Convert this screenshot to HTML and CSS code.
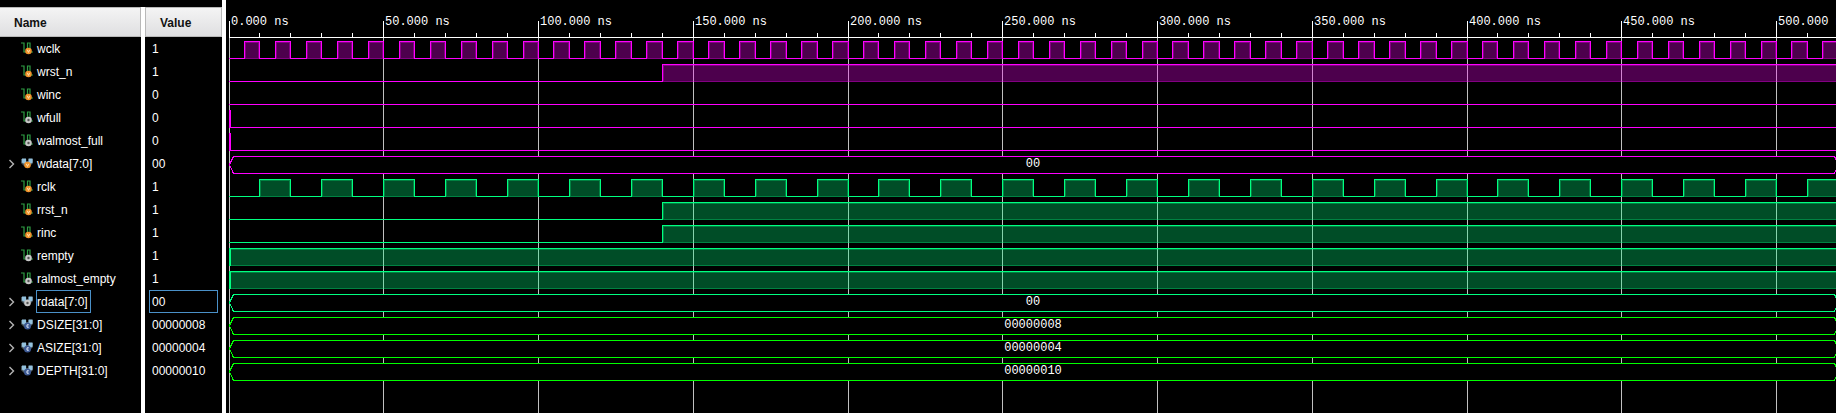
FILE: index.html
```
<!DOCTYPE html>
<html lang="en">
<head>
<meta charset="utf-8">
<title>Waveform viewer</title>
<link rel="stylesheet" href="styles.css">
</head>
<body>
<svg class="defs" aria-hidden="true">
  <symbol id="wire" viewBox="0 0 14 14">
    <path d="M0 1H3V10H5M6.5 8V1H9V10H12" fill="none" stroke="#2f9e44" stroke-width="1.2"/>
  </symbol>
  <symbol id="bus" viewBox="0 0 14 14">
    <path d="M0 2H12V6L9 9H3L0 6Z" fill="#4a5860"/>
    <path d="M1 1.5H5V6.5H2.5L1 5.5ZM7.5 1.5H11.5V5.5L10 6.5H7.5Z" fill="#93c1dd"/>
    <path d="M5.3 1H7.2V4H5.3Z" fill="#000"/>
  </symbol>
  <symbol id="in" viewBox="0 0 14 14">
    <circle cx="7.5" cy="9" r="3.3" fill="#f0932b"/>
    <path d="M6.3 7.8L7.5 10.4L8.7 7.8" fill="none" stroke="#ffe0b0" stroke-width="1"/>
  </symbol>
  <symbol id="out" viewBox="0 0 14 14">
    <circle cx="7.5" cy="9" r="3.3" fill="#c8c8c8"/>
    <circle cx="7.5" cy="9" r="1.2" fill="#555"/>
  </symbol>
  <symbol id="const" viewBox="0 0 14 14">
    <circle cx="7.5" cy="9" r="3.5" fill="#3d5a94"/>
    <path d="M8.8 7.8H7V10.2H8.8" fill="none" stroke="#dfe8f8" stroke-width="1"/>
  </symbol>
</svg>
<main class="viewer">
  <section class="signals">
    <table class="signal-table">
      <thead>
        <tr><th class="name-head" scope="col">Name</th><td class="split"></td><th class="value-head" scope="col">Value</th></tr>
      </thead>
      <tbody id="rows"></tbody>
    </table>
  </section>
  <section class="waves">
    <svg class="chart" id="chart" role="img" aria-label="Signal waveforms"></svg>
  </section>
</main>
<script src="viewer.js"></script>
</body>
</html>
```
FILE: styles.css
```
* {
  box-sizing: border-box;
}

body {
  margin: 0;
  background: #000;
  color: #fff;
  font: 12px/22px "Liberation Sans", Arial, sans-serif;
}

.defs {
  display: none;
}

.viewer {
  display: flex;
  min-height: 100vh;
}

.signals {
  display: flex;
  flex: none;
  padding-top: 7px;
  border-right: 4px solid #fff;
}

.signal-table {
  border-collapse: separate;
  border-spacing: 0;
  table-layout: fixed;
  width: 222px;
}

.signal-table th,
.signal-table td {
  padding: 0;
  text-align: left;
  white-space: nowrap;
}

.signal-table th {
  height: 30px;
  border: 1px solid #b8b8b8;
  background: linear-gradient(#f4f4f4, #dfdfe1);
  color: #111;
  font-weight: bold;
}

.signal-table .name-head {
  width: 141px;
  padding: 2px 0 0 14px;
  border-left: 0;
}

.signal-table .value-head {
  padding: 2px 0 0 14px;
}

.signal-table .split {
  width: 4px;
  background: #fff;
}

.row td {
  height: 23px;
}

.name-cell {
  display: flex;
  align-items: center;
  height: 23px;
  padding-left: 8px;
}

.expander {
  width: 12px;
  height: 12px;
  padding: 0;
  border: 0;
  background: none;
}

.expander svg {
  display: block;
  width: 8px;
  height: 12px;
  fill: none;
  stroke: #b4b4b4;
  stroke-width: 1.4;
}

.spacer {
  width: 12px;
}

.icon {
  flex: none;
  width: 14px;
  height: 14px;
  margin: 0 1px;
}

.label,
.value {
  height: 23px;
  border: 1px solid transparent;
}

.label {
  padding-right: 2px;
}

.value {
  margin: 0 4px;
  padding-left: 2px;
}

.selected .label,
.selected .value {
  border-color: #4a90c8;
}

.waves {
  flex: 1;
  min-width: 0;
  display: flex;
}

.chart {
  flex: 1;
  min-width: 0;
  shape-rendering: crispEdges;
  font: 12px "Liberation Mono", "Courier New", monospace;
}

.chart text {
  fill: #fff;
}

.centered {
  text-anchor: middle;
}

.axis {
  fill: #fff;
}

.grid {
  fill: #c0c0c0;
}

.magenta {
  color: #ff00ff;
}

.spring {
  color: #00ff80;
}

.green {
  color: #00ff00;
}

.line {
  fill: currentColor;
}

.tint {
  fill: currentColor;
  fill-opacity: 0.3;
}

.bus {
  fill: #000;
  stroke: currentColor;
}
```
FILE: viewer.js
```
const signals = [
  { name: "wclk", value: "1", icon: "in", color: "magenta", clock: [5, 10] },
  { name: "wrst_n", value: "1", icon: "in", color: "magenta", rise: 140 },
  { name: "winc", value: "0", icon: "in", color: "magenta" },
  { name: "wfull", value: "0", icon: "out", color: "magenta", start: true },
  { name: "walmost_full", value: "0", icon: "out", color: "magenta", start: true },
  { name: "wdata[7:0]", value: "00", icon: "in", color: "magenta", bus: true },
  { name: "rclk", value: "1", icon: "in", color: "spring", clock: [10, 20] },
  { name: "rrst_n", value: "1", icon: "in", color: "spring", rise: 140 },
  { name: "rinc", value: "1", icon: "in", color: "spring", rise: 140 },
  { name: "rempty", value: "1", icon: "out", color: "spring", rise: 0, start: true },
  { name: "ralmost_empty", value: "1", icon: "out", color: "spring", rise: 0, start: true },
  { name: "rdata[7:0]", value: "00", icon: "out", color: "spring", bus: true, selected: true },
  { name: "DSIZE[31:0]", value: "00000008", icon: "const", color: "green", bus: true },
  { name: "ASIZE[31:0]", value: "00000004", icon: "const", color: "green", bus: true },
  { name: "DEPTH[31:0]", value: "00000010", icon: "const", color: "green", bus: true }
];

const HEADER = 37;
const ROW = 23;
const ORIGIN = 3;
const SCALE = 3.095;

function buildTable() {
  const rows = signals.map(s => `
    <tr class="row${s.selected ? " selected" : ""}">
      <td><div class="name-cell">
        ${s.bus
          ? `<button class="expander" aria-label="Expand ${s.name}"><svg viewBox="0 0 8 12"><path d="M1.5 2L5.5 6L1.5 10"/></svg></button>`
          : `<span class="spacer"></span>`}
        <svg class="icon" viewBox="0 0 14 14"><use href="#${s.bus ? "bus" : "wire"}" width="14" height="14"/><use href="#${s.icon}" x="${s.bus ? -1 : 0}" y="${s.bus ? -1 : 0}" width="14" height="14"/></svg>
        <span class="label">${s.name}</span>
      </div></td>
      <td class="split"></td>
      <td><div class="value">${s.value}</div></td>
    </tr>`);
  document.getElementById("rows").innerHTML =
    rows.join("") + `<tr><td></td><td class="split"></td><td></td></tr>`;
}

const xAt = ns => ORIGIN + Math.floor(ns * SCALE);
const rect = (cls, x, y, w, h) => `<rect class="${cls}" x="${x}" y="${y}" width="${w}" height="${h}"/>`;

function high(x1, x2, top) {
  const w = x2 - x1;
  return rect("tint", x1, top, w, 18) +
    rect("tint", x1 + 1, top + 1, w - 1, 1) +
    rect("tint", x1, top + 17, w, 1) +
    rect("tint", x1 + 1, top + 2, 1, 15) +
    rect("tint", x2 - 1, top + 2, 1, 15) +
    rect("line", x1, top, w, 1) +
    rect("line", x1, top, 1, 18) +
    rect("line", x2, top, 1, 18);
}

function drawSignal(s, top, width) {
  const low = top + 17;
  let out = "";
  if (s.bus) {
    const end = width - 2;
    const mid = top + 8;
    out += `<path class="bus" transform="translate(.5 .5)" d="M${ORIGIN} ${mid}L${ORIGIN + 4} ${top}H${end}L${end + 4} ${mid}L${end} ${low}H${ORIGIN + 4}Z"/>`;
    out += `<text class="centered" x="${Math.round((ORIGIN + width) / 2)}" y="${top + 11}">${s.value}</text>`;
  } else if (s.clock) {
    const [rise, period] = s.clock;
    let from = ORIGIN;
    for (let t = rise; xAt(t) < width; t += period) {
      const fall = xAt(t + period - rise);
      out += rect("line", from, low, xAt(t) - from, 1) + high(xAt(t), fall, top);
      from = fall;
    }
    if (from < width) out += rect("line", from, low, width - from, 1);
  } else if (s.rise !== undefined) {
    const x = xAt(s.rise);
    out += rect("line", ORIGIN, low, x - ORIGIN, 1) + high(x, width + 2, top);
  } else {
    out += rect("line", ORIGIN, low, width - ORIGIN, 1);
  }
  if (s.start) out += rect("line", ORIGIN, top, 2, 18);
  return `<g class="${s.color}">${out}</g>`;
}

function drawChart() {
  const chart = document.getElementById("chart");
  const { width, height } = chart.getBoundingClientRect();
  let out = "";
  for (let t = 0; xAt(t) < width; t += 10) {
    const x = xAt(t);
    if (t % 50 === 0) {
      out += rect("axis", x, 21, 1, 16) + rect("grid", x, HEADER, 1, height - HEADER);
      out += `<text x="${x + 2}" y="25">${t}.000 ns</text>`;
    } else {
      out += rect("axis", x, 33, 1, 4);
    }
  }
  out += rect("axis", ORIGIN, HEADER, width - ORIGIN, 1);
  signals.forEach((s, i) => { out += drawSignal(s, HEADER + i * ROW + 4, width); });
  chart.innerHTML = out;
}

buildTable();
drawChart();
window.addEventListener("resize", drawChart);
```
